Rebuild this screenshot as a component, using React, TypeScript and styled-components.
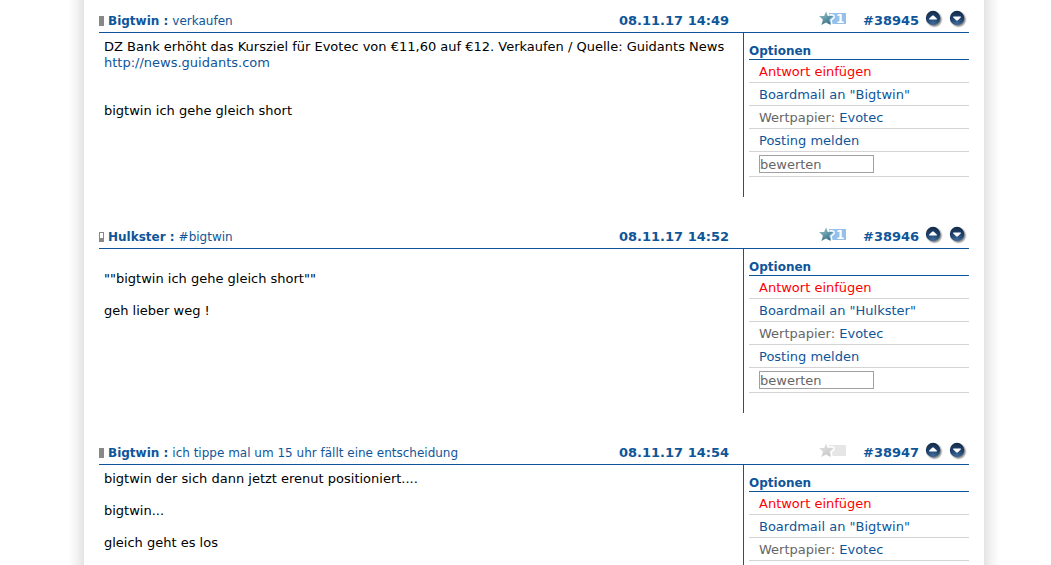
import React from "react";
import styled, { createGlobalStyle } from "styled-components";

const BLUE = "#0f5599";

const GlobalStyle = createGlobalStyle`
  * { box-sizing: border-box; }
  body {
    margin: 0;
    background: #fff;
    color: #000;
    font: 13px/16px "DejaVu Sans", Verdana, sans-serif;
  }
`;

const Page = styled.div`
  padding-left: 17px;
`;

const Sheet = styled.main`
  display: grid;
  grid-template-columns: 15px minmax(0, 1fr) 15px;
  max-width: 930px;
  margin: 0 auto;
`;

const Shade = styled.div<{ $fade: "left" | "right" }>`
  background: linear-gradient(to ${(p) => p.$fade}, #e4e4e4, #f3f3f3 50%, #fefefe);
`;

const Thread = styled.div`
  padding: 0 15px;
`;

const Post = styled.article`
  padding-bottom: 19px;
`;

const Header = styled.header`
  display: grid;
  grid-template-columns: minmax(0, 1fr) 200px 44px 62px 44px;
  align-items: center;
  height: 33px;
  padding-top: 10px;
  border-bottom: 1px solid ${BLUE};
  color: ${BLUE};
`;

const Title = styled.h2`
  display: flex;
  align-items: center;
  gap: 4px;
  margin: 0;
  font-size: 12px;
  font-weight: normal;
  white-space: nowrap;
`;

const Level = styled.span<{ $open?: boolean }>`
  width: 5px;
  height: 10px;
  border: 1px solid #888;
  background: ${(p) => (p.$open ? "linear-gradient(#fff 60%, #888 60%)" : "#888")};
`;

const Link = styled.a<{ $tone?: "red" }>`
  color: ${(p) => (p.$tone === "red" ? "#f00" : BLUE)};
  text-decoration: none;
`;

const Strong = styled.span`
  font-weight: bold;
  white-space: nowrap;
`;

const Arrows = styled.nav`
  display: flex;
  gap: 6px;
  margin-bottom: 4px;
`;

const ArrowLink = styled.a`
  display: block;
  width: 18px;
  height: 18px;
`;

const StarSvg = styled.svg`
  display: block;
  margin-bottom: 4px;
`;

const Body = styled.div`
  display: grid;
  grid-template-columns: minmax(0, 1fr) 226px;
  min-height: 164px;
`;

const Text = styled.div`
  padding: 6px 5px;
  white-space: pre-line;
`;

const Side = styled.aside`
  border-left: 1px solid ${BLUE};
  padding: 0 0 20px 5px;
`;

const SideTitle = styled.h3`
  margin: 0;
  padding-top: 10px;
  border-bottom: 1px solid ${BLUE};
  color: ${BLUE};
  font-size: 12px;
  font-weight: bold;
`;

const Options = styled.ul`
  margin: 0;
  padding: 0;
  list-style: none;
`;

const Option = styled.li`
  padding: 4px 10px 2px;
  border-bottom: 1px solid #d4d4d4;
  color: #666;
`;

const RatingOption = styled(Option)`
  padding: 3px 10px;
`;

const Rating = styled.input`
  display: block;
  width: 115px;
  height: 18px;
  padding: 0;
  border: 1px solid #a0a0a0;
  border-radius: 0;
  background: #fff;
  color: #666;
  font: inherit;
`;

function Star({ count }: { count?: number }) {
  const on = count !== undefined;
  const fillId = on ? "starOn" : "starOff";
  return (
    <StarSvg width="28" height="16" viewBox="0 0 28 16" role="img" aria-label="Bewertung">
      <defs>
        <linearGradient id={fillId} x1="0" y1="0" x2="0.6" y2="1">
          <stop offset="0" stopColor={on ? "#a4cbd6" : "#e4e4e4"} />
          <stop offset="0.5" stopColor={on ? "#6ba0b0" : "#d8d8d8"} />
          <stop offset="1" stopColor={on ? "#3a7080" : "#c8c8c8"} />
        </linearGradient>
      </defs>
      <path d="M10 2h17v11H10z" fill={on ? "#94c1ea" : "#e6e6e6"} />
      <path
        d="M7 0.4 8.8 4.9 14 5 10.2 8.6 11.8 14 7 11.4 2.4 14 3.9 8.8 0 5 5.2 4.9z"
        fill={`url(#${fillId})`}
      />
      <path d="M10.4 4Q15.8 3.2 15.2 6 14.8 7.4 12.2 9L12.8 13" fill="none" stroke="#fff" strokeWidth="1.4" />
      {on && (
        <text x="17" y="12" fill="#fff" fontFamily="DejaVu Sans, sans-serif" fontSize="12" fontWeight="bold">
          {count}
        </text>
      )}
    </StarSvg>
  );
}

function Arrow({ down }: { down?: boolean }) {
  const id = down ? "ballDown" : "ballUp";
  return (
    <svg width="18" height="18" viewBox="0 0 18 18" aria-hidden="true">
      <defs>
        <radialGradient id={id} cx="0.5" cy="0.9" r="0.85">
          <stop offset="0" stopColor="#3f6b9b" />
          <stop offset="0.6" stopColor="#1d4069" />
          <stop offset="1" stopColor="#142c4c" />
        </radialGradient>
        <radialGradient id={id + "Shadow"}>
          <stop offset="0.7" stopColor="#555" stopOpacity="0.7" />
          <stop offset="1" stopColor="#888" stopOpacity="0" />
        </radialGradient>
      </defs>
      <circle cx="9.4" cy="9.4" r="8.6" fill={`url(#${id}Shadow)`} />
      <circle cx="8" cy="8" r="7.2" fill={`url(#${id})`} />
      <path
        d={down ? "M4.2 6.5h7.6v1L8.6 10.6H7.4L4.2 7.5z" : "M4.2 9.5h7.6v-1L8.6 5.4H7.4L4.2 8.5z"}
        fill="#fff"
      />
    </svg>
  );
}

type PostData = {
  id: number;
  author: string;
  subject: string;
  time: string;
  open?: boolean;
  stars?: number;
  body: React.ReactNode;
};

const posts: PostData[] = [
  {
    id: 38945,
    author: "Bigtwin",
    subject: "verkaufen",
    time: "08.11.17 14:49",
    stars: 1,
    body: (
      <>
        {"DZ Bank erhöht das Kursziel für Evotec von €11,60 auf €12. Verkaufen / Quelle: Guidants News\n"}
        <Link href="#news">http://news.guidants.com</Link>
        {"\n\n\nbigtwin ich gehe gleich short"}
      </>
    ),
  },
  {
    id: 38946,
    author: "Hulkster",
    subject: "#bigtwin",
    time: "08.11.17 14:52",
    open: true,
    stars: 1,
    body: '\n""bigtwin ich gehe gleich short""\n\ngeh lieber weg !',
  },
  {
    id: 38947,
    author: "Bigtwin",
    subject: "ich tippe mal um 15 uhr fällt eine entscheidung",
    time: "08.11.17 14:54",
    body: "bigtwin der sich dann jetzt erenut positioniert....\n\nbigtwin...\n\ngleich geht es los",
  },
];

export default function App() {
  return (
    <Page>
      <GlobalStyle />
      <Sheet>
        <Shade $fade="left" />
        <Thread>
          {posts.map((post) => (
            <Post key={post.id} id={`p${post.id}`}>
              <Header>
                <Title>
                  <Level $open={post.open} />
                  <Strong>{post.author} :</Strong>
                  <Link href={`#p${post.id}`}>{post.subject}</Link>
                </Title>
                <Strong>{post.time}</Strong>
                <Star count={post.stars} />
                <Strong>#{post.id}</Strong>
                <Arrows aria-label="Beiträge">
                  <ArrowLink href={`#p${post.id - 1}`} aria-label="Voriger Beitrag">
                    <Arrow />
                  </ArrowLink>
                  <ArrowLink href={`#p${post.id + 1}`} aria-label="Nächster Beitrag">
                    <Arrow down />
                  </ArrowLink>
                </Arrows>
              </Header>
              <Body>
                <Text>{post.body}</Text>
                <Side>
                  <SideTitle>Optionen</SideTitle>
                  <Options>
                    <Option>
                      <Link href="#antwort" $tone="red">Antwort einfügen</Link>
                    </Option>
                    <Option>
                      <Link href="#boardmail">Boardmail an "{post.author}"</Link>
                    </Option>
                    <Option>
                      Wertpapier: <Link href="#evotec">Evotec</Link>
                    </Option>
                    <Option>
                      <Link href="#melden">Posting melden</Link>
                    </Option>
                    <RatingOption>
                      <Rating aria-label="Posting bewerten" defaultValue="bewerten" />
                    </RatingOption>
                  </Options>
                </Side>
              </Body>
            </Post>
          ))}
        </Thread>
        <Shade $fade="right" />
      </Sheet>
    </Page>
  );
}
